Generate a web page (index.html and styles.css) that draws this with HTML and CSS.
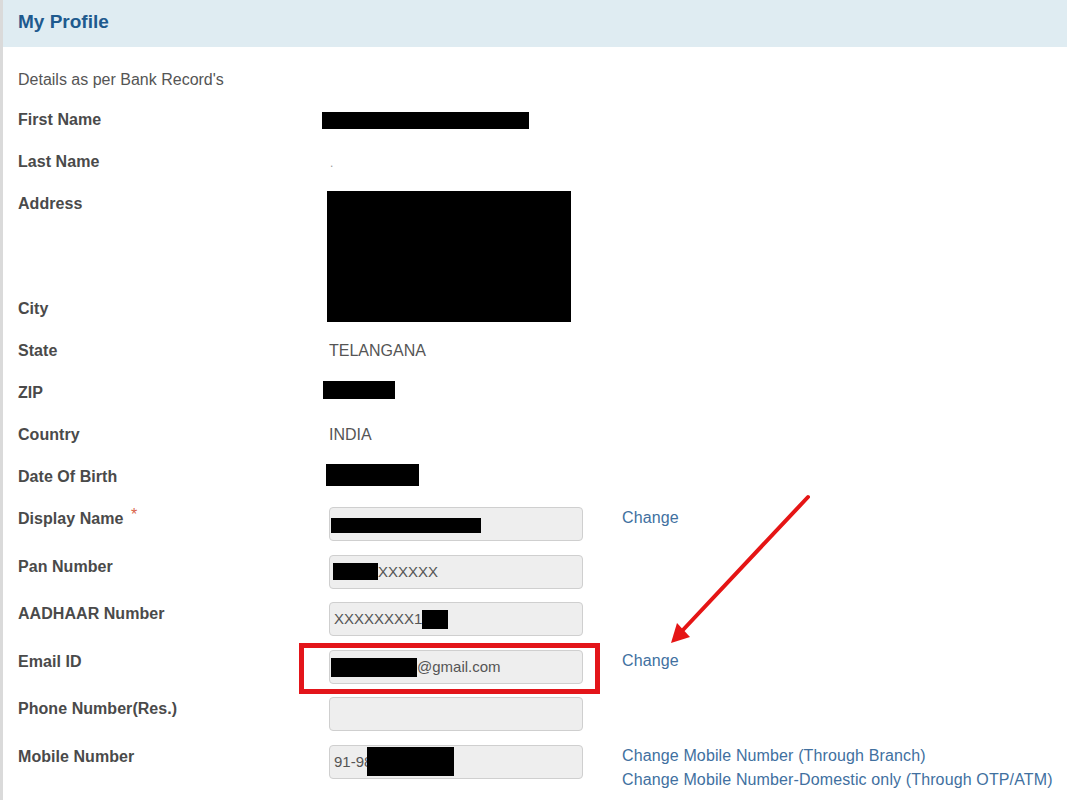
FILE: index.html
```
<!DOCTYPE html>
<html lang="en">
<head>
    <meta charset="UTF-8"/>
    <title>My Profile</title>
    <link rel="stylesheet" href="styles.css">
</head>
<body>
<div class="panel">
    <!-- header -->
    <div class="panel-head">
        <h1 class="title">My Profile</h1>
    </div>

    <div class="panel-body">
        <p class="note">Details as per Bank Record's</p>

        <div class="row">
            <div class="label">First Name</div>
            <div class="value"><span class="redact r-first"></span></div>
        </div>
        <div class="row">
            <div class="label">Last Name</div>
            <div class="value"><span class="dot">.</span></div>
        </div>
        <div class="row row-address">
            <div class="label">Address</div>
            <div class="value"><span class="redact r-address"></span></div>
        </div>
        <div class="row">
            <div class="label">City</div>
            <div class="value"></div>
        </div>
        <div class="row">
            <div class="label">State</div>
            <div class="value">TELANGANA</div>
        </div>
        <div class="row">
            <div class="label">ZIP</div>
            <div class="value"><span class="redact r-zip"></span></div>
        </div>
        <div class="row">
            <div class="label">Country</div>
            <div class="value">INDIA</div>
        </div>
        <div class="row">
            <div class="label">Date Of Birth</div>
            <div class="value"><span class="redact r-dob"></span></div>
        </div>

        <div class="row row-field">
            <div class="label">Display Name <span class="req">*</span></div>
            <div class="value">
                <div class="field"><span class="redact r-display"></span></div>
            </div>
            <div class="links"><a href="#">Change</a></div>
        </div>
        <div class="row row-field">
            <div class="label">Pan Number</div>
            <div class="value">
                <div class="field"><span class="redact r-pan"></span>XXXXXX</div>
            </div>
        </div>
        <div class="row row-field">
            <div class="label">AADHAAR Number</div>
            <div class="value">
                <div class="field">XXXXXXXX1<span class="redact r-aadhaar"></span></div>
            </div>
        </div>
        <div class="row row-field">
            <div class="label">Email ID</div>
            <div class="value">
                <div class="field"><span class="redact r-email"></span>@gmail.com</div>
            </div>
            <div class="links"><a href="#">Change</a></div>
        </div>
        <div class="row row-field">
            <div class="label">Phone Number(Res.)</div>
            <div class="value">
                <div class="field"></div>
            </div>
        </div>
        <div class="row row-field">
            <div class="label">Mobile Number</div>
            <div class="value">
                <div class="field">91-98<span class="redact r-mobile"></span></div>
            </div>
            <div class="links">
                <a href="#">Change Mobile Number (Through Branch)</a>
                <a href="#">Change Mobile Number-Domestic only (Through OTP/ATM)</a>
            </div>
        </div>
    </div>

    <!-- annotation drawn over the page -->
    <div class="mark-box"></div>
    <svg class="mark-arrow" width="160" height="160" viewBox="0 0 160 160">
        <line x1="148" y1="7" x2="22" y2="141" stroke="#e51515" stroke-width="4" stroke-linecap="round"/>
        <polygon points="11,153 30,147 17,133" fill="#e51515"/>
    </svg>
</div>
</body>
</html>
```

FILE: styles.css
```
body {
    margin: 0;
    font-family: "Liberation Sans", Arial, sans-serif;
    background-color: #fff;
}

.panel {
    position: relative;
    min-height: 800px;
    border-left: 3px solid #dadada;
    overflow: hidden;
}

.panel-head {
    height: 47px;
    background-color: #dfecf2;
    padding-left: 15px;
    display: flex;
    align-items: center;
}

.title {
    margin: 0;
    font-size: 19px;
    font-weight: bold;
    color: #1e5a8e;
    margin-top: -3px;
}

.panel-body {
    padding-left: 15px;
}

.note {
    margin: 0;
    padding: 23px 0 8px;
    line-height: 20px;
    font-size: 16px;
    color: #555;
}

.row {
    display: flex;
    height: 42px;
    font-size: 16px;
    line-height: 20px;
}

.row-address {
    height: 105px;
}

.row-field {
    height: 47.5px;
}

.label {
    width: 311px;
    flex-shrink: 0;
    padding-top: 12px;
    font-weight: bold;
    color: #4a4a4a;
    letter-spacing: 0.05px;
}

.req {
    color: #d9634a;
    font-weight: normal;
    position: relative;
    top: -4px;
    margin-left: 3px;
}

.value {
    width: 293px;
    flex-shrink: 0;
    padding-top: 12px;
    color: #555;
}

.row-field .label {
    padding-top: 12px;
}

.row-field .value {
    padding-top: 10px;
}

.dot {
    color: #999;
    font-size: 12px;
    margin-left: 1px;
}

.field {
    width: 254px;
    height: 34px;
    box-sizing: border-box;
    border: 1px solid #cfcfcf;
    border-radius: 4px;
    background-color: #eeeeee;
    display: flex;
    align-items: center;
    padding: 0 4px;
    font-size: 15px;
    color: #555;
}

.links {
    padding-top: 9px;
    line-height: 24px;
    display: flex;
    flex-direction: column;
}

.links a {
    color: #41709f;
    text-decoration: none;
    font-size: 16px;
    letter-spacing: 0.13px;
}

/* black redaction bars */
.redact {
    display: block;
    background-color: #000;
    flex-shrink: 0;
}

.r-first { width: 207px; height: 17px; margin: 2px 0 0 -7px; }
.r-address { width: 244px; height: 131px; margin: -3px 0 0 -2px; }
.r-zip { width: 72px; height: 18px; margin: -2px 0 0 -6px; }
.r-dob { width: 93px; height: 22px; margin: -3px 0 0 -3px; }
.r-display { width: 150px; height: 15px; margin: 2px 0 0 -3px; }
.r-pan { width: 45px; height: 17px; margin-left: -1px; }
.r-aadhaar { width: 26px; height: 19px; }
.r-email { width: 86px; height: 19px; margin: 1px 0 0 -3px; }
.r-mobile { width: 87px; height: 29px; margin-left: -5px; }

.mark-box {
    position: absolute;
    left: 296px;
    top: 643px;
    width: 291px;
    height: 41px;
    border: 5px solid #e3151a;
}

.mark-arrow {
    position: absolute;
    left: 657px;
    top: 490px;
}
```
